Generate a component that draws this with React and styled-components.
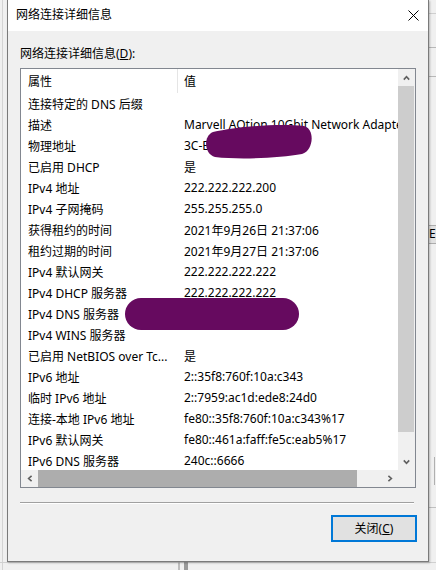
import React from "react";
import styled, { createGlobalStyle } from "styled-components";

const Global = createGlobalStyle`
  html, body { margin: 0; padding: 0; }
  body {
    background: #f0f0f0;
    font-family: "Noto Sans", "Noto Sans CJK SC", sans-serif;
    font-size: 12px;
    color: #000;
  }
  #root { width: 436px; height: 570px; overflow: hidden; }
`;

const Desktop = styled.div`
  position: relative;
  width: 436px;
  height: 570px;
  overflow: hidden;
  background: #f0f0f0;
  display: flex;
  padding-left: 7px;
  box-sizing: border-box;
`;

const BackLine = styled.div`
  position: absolute;
  background: ${(p) => p.$color || "#c8c8c8"};
  left: ${(p) => p.$x}px;
  top: ${(p) => p.$y}px;
  width: ${(p) => p.$w}px;
  height: ${(p) => p.$h}px;
`;

const BackButton = styled.div`
  position: absolute;
  left: 410px;
  top: 225px;
  width: 40px;
  height: 19px;
  border: 1px solid #adadad;
  background: #e1e1e1;
  box-sizing: border-box;
  padding-left: 18px;
  line-height: 16px;
  font-size: 12px;
  white-space: nowrap;
`;

const Window = styled.div`
  position: relative;
  z-index: 1;
  width: 422px;
  height: 562px;
  box-sizing: border-box;
  border: 1px solid #7a7a7a;
  border-top: none;
  background: #f0f0f0;
  display: flex;
  flex-direction: column;
  box-shadow: 1px 1px 2px rgba(0, 0, 0, 0.25);
`;

const TitleBar = styled.div`
  height: 31px;
  flex: none;
  background: #fff;
  display: flex;
  align-items: center;
  justify-content: space-between;
  padding: 0 9px 0 8px;
`;

const Title = styled.div`
  font-size: 12px;
  line-height: 16px;
  padding-bottom: 1px;
`;

const CloseGlyph = styled.svg`
  width: 11px;
  height: 11px;
  display: block;
  margin-bottom: 1px;
`;

const Body = styled.div`
  flex: 1;
  display: flex;
  flex-direction: column;
  padding: 15px 12px 0 12px;
`;

const Label = styled.div`
  line-height: 16px;
  height: 16px;
  margin-bottom: 6px;
`;

const ListBox = styled.div`
  height: 420px;
  box-sizing: border-box;
  border: 1px solid #828790;
  background: #fff;
  display: grid;
  grid-template-columns: 1fr 17px;
  grid-template-rows: 1fr 17px;
`;

const Viewport = styled.div`
  position: relative;
  overflow: hidden;
  white-space: nowrap;
`;

const HeaderRow = styled.div`
  display: flex;
  height: 24px;
  align-items: stretch;
`;

const HeaderCell = styled.div`
  display: flex;
  align-items: center;
  box-sizing: border-box;
  width: ${(p) => (p.$first ? "157px" : "auto")};
  padding-left: ${(p) => (p.$first ? "7px" : "6px")};
  border-right: ${(p) => (p.$first ? "1px solid #e5e5e5" : "none")};
  padding-bottom: 1px;
`;

const Row = styled.div`
  display: flex;
  height: 21px;
  align-items: center;
`;

const NameCell = styled.div`
  width: 156px;
  flex: none;
  box-sizing: border-box;
  padding-left: 7px;
  overflow: hidden;
`;

const ValueCell = styled.div`
  padding-left: 7px;
`;

const Redaction = styled.svg`
  position: absolute;
  left: 0;
  top: 0;
  width: 377px;
  height: 401px;
  pointer-events: none;
`;

const VScroll = styled.div`
  background: #f0f0f0;
  display: flex;
  flex-direction: column;
`;

const HScroll = styled.div`
  background: #f0f0f0;
  display: flex;
`;

const Corner = styled.div`
  background: #f0f0f0;
`;

const ArrowBox = styled.div`
  flex: none;
  width: 17px;
  height: 17px;
  display: flex;
  align-items: center;
  justify-content: center;
`;

const VThumb = styled.div`
  height: 346px;
  margin-right: 1px;
  background: #cdcdcd;
`;

const HThumb = styled.div`
  width: 319px;
  background: #adadad;
`;

const Spacer = styled.div`
  flex: 1;
`;

const Separator = styled.div`
  margin-top: 14px;
  margin-right: 2px;
  border-top: 1px solid #a0a0a0;
  border-bottom: 1px solid #ffffff;
  height: 0;
`;

const Footer = styled.div`
  display: flex;
  justify-content: flex-end;
  margin-top: 11px;
  margin-right: -1px;
`;

const Button = styled.div`
  width: 86px;
  height: 27px;
  box-sizing: border-box;
  border: 2px solid #0078d7;
  background: #e1e1e1;
  display: flex;
  align-items: center;
  justify-content: center;
  padding-bottom: 1px;
`;

const Chevron = ({ dir }) => {
  const pts = {
    up: "0.8,4.6 3.5,1.6 6.2,4.6",
    down: "0.8,1.4 3.5,4.4 6.2,1.4",
    left: "4.6,0.8 1.6,3.5 4.6,6.2",
    right: "1.4,0.8 4.4,3.5 1.4,6.2",
  }[dir];
  const vertical = dir === "up" || dir === "down";
  return (
    <svg
      width={vertical ? 7 : 6}
      height={vertical ? 6 : 7}
      viewBox={vertical ? "0 0 7 6" : "0 0 6 7"}
    >
      <polyline points={pts} fill="none" stroke="#606060" strokeWidth="1.6" />
    </svg>
  );
};

const rows = [
  ["连接特定的 DNS 后缀", ""],
  ["描述", "Marvell AQtion 10Gbit Network Adapter"],
  ["物理地址", "3C-EC-EF-00-00-00"],
  ["已启用 DHCP", "是"],
  ["IPv4 地址", "222.222.222.200"],
  ["IPv4 子网掩码", "255.255.255.0"],
  ["获得租约的时间", "2021年9月26日 21:37:06"],
  ["租约过期的时间", "2021年9月27日 21:37:06"],
  ["IPv4 默认网关", "222.222.222.222"],
  ["IPv4 DHCP 服务器", "222.222.222.222"],
  ["IPv4 DNS 服务器", "222.222.222.222"],
  ["IPv4 WINS 服务器", ""],
  ["已启用 NetBIOS over Tc...", "是"],
  ["IPv6 地址", "2::35f8:760f:10a:c343"],
  ["临时 IPv6 地址", "2::7959:ac1d:ede8:24d0"],
  ["连接-本地 IPv6 地址", "fe80::35f8:760f:10a:c343%17"],
  ["IPv6 默认网关", "fe80::461a:faff:fe5c:eab5%17"],
  ["IPv6 DNS 服务器", "240c::6666"],
];

export default function App() {
  return (
    <>
      <Global />
      <Desktop>
        <BackLine $x={2} $y={0} $w={1} $h={570} $color="#d4d4d4" />
        <BackLine $x={0} $y={562} $w={436} $h={1} $color="#d0d0d0" />
        <BackLine $x={178} $y={562} $w={2} $h={8} $color="#bdbdbd" />
        <BackLine $x={184} $y={562} $w={4} $h={8} $color="#9a9a9a" />
        <BackLine $x={429} $y={13} $w={7} $h={1} $color="#cfcfcf" />
        <BackLine $x={429} $y={47} $w={7} $h={1} $color="#b8b8b8" />
        <BackLine $x={429} $y={76} $w={7} $h={1} $color="#b8b8b8" />
        <BackLine $x={434} $y={457} $w={1} $h={28} $color="#b0b0b0" />
        <BackLine $x={429} $y={507} $w={7} $h={1} $color="#c0c0c0" />
        <BackButton>E)</BackButton>
        <Window>
          <TitleBar>
            <Title>网络连接详细信息</Title>
            <CloseGlyph viewBox="0 0 11 11">
              <path d="M0.5 0.5 L10.5 10.5 M10.5 0.5 L0.5 10.5" stroke="#000" strokeWidth="1" fill="none" />
            </CloseGlyph>
          </TitleBar>
          <Body>
            <Label>
              网络连接详细信息(<u>D</u>):
            </Label>
            <ListBox>
              <Viewport>
                <HeaderRow>
                  <HeaderCell $first>属性</HeaderCell>
                  <HeaderCell>值</HeaderCell>
                </HeaderRow>
                {rows.map(([k, v], i) => (
                  <Row key={i}>
                    <NameCell>{k}</NameCell>
                    <ValueCell>{v}</ValueCell>
                  </Row>
                ))}
                <Redaction viewBox="0 0 377 401">
                  <path
                    d="M192,63 C215,58 255,54 283,57 C294,60 293,81 281,85 C259,89 219,91 194,88 C183,85 182,67 192,63 Z"
                    fill="#660a5f"
                  />
                  <rect x="104" y="229" width="174" height="32" rx="16" fill="#660a5f" />
                </Redaction>
              </Viewport>
              <VScroll>
                <ArrowBox>
                  <Chevron dir="up" />
                </ArrowBox>
                <VThumb />
                <Spacer />
                <ArrowBox>
                  <Chevron dir="down" />
                </ArrowBox>
              </VScroll>
              <HScroll>
                <ArrowBox>
                  <Chevron dir="left" />
                </ArrowBox>
                <HThumb />
                <Spacer />
                <ArrowBox>
                  <Chevron dir="right" />
                </ArrowBox>
              </HScroll>
              <Corner />
            </ListBox>
            <Separator />
            <Footer>
              <Button>
                关闭(<u>C</u>)
              </Button>
            </Footer>
          </Body>
        </Window>
      </Desktop>
    </>
  );
}
